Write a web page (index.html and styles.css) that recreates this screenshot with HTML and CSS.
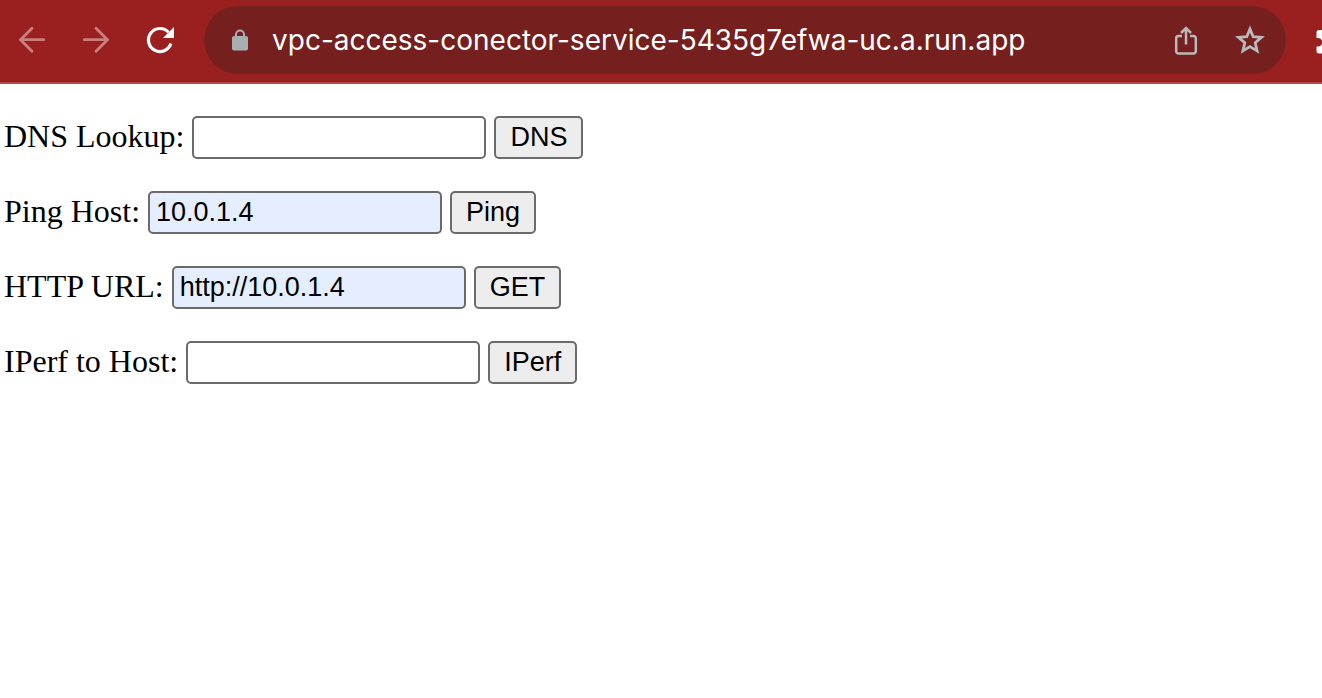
FILE: index.html
```html
<!DOCTYPE html>
<html lang="en">
<head>
<meta charset="utf-8">
<meta name="viewport" content="width=device-width, initial-scale=1">
<title>VPC Access Connector</title>
<link rel="stylesheet" href="styles.css">
</head>
<body>
<header class="toolbar">
  <nav class="nav" aria-label="Browser navigation">
    <button class="icon-button dim" type="button" aria-label="Back">
      <svg class="icon" viewBox="0 0 32 32" fill="none" stroke="currentColor" stroke-width="2.8" stroke-linecap="round"><path d="M27.700 15.700H5M16 4.200 4.500 15.700 16 27.200"/></svg>
    </button>
    <button class="icon-button dim" type="button" aria-label="Forward">
      <svg class="icon" viewBox="0 0 32 32" fill="none" stroke="currentColor" stroke-width="2.8" stroke-linecap="round"><path d="M4.300 15.700H27M16 4.200 27.500 15.700 16 27.200"/></svg>
    </button>
    <button class="icon-button" type="button" aria-label="Reload">
      <svg class="icon" viewBox="0 0 32 32"><path d="M26.900 19.600A11.500 11.500 0 1 1 24.500 8.300" fill="none" stroke="currentColor" stroke-width="3.200"/><path d="M30 3v11H19z" fill="currentColor"/></svg>
    </button>
  </nav>
  <div class="address">
    <svg class="lock" viewBox="0 0 16 22"><rect y="7" width="16" height="14.500" rx="2" fill="currentColor"/><path d="M4 8V5.500a4 4 0 0 1 8 0V8" fill="none" stroke="currentColor" stroke-width="2"/></svg>
    <input class="url" type="text" aria-label="Address" value="vpc-access-conector-service-5435g7efwa-uc.a.run.app">
    <button class="icon-button soft" type="button" aria-label="Share">
      <svg class="icon" viewBox="0 0 32 32" fill="none" stroke="currentColor" stroke-width="2.500"><path d="M12 12H8.500A2.300 2.300 0 0 0 6.200 14.300v13A2.300 2.300 0 0 0 8.500 29.600h15A2.300 2.300 0 0 0 25.800 27.300v-13A2.300 2.300 0 0 0 23.500 12H20M16 20.500V4M11 9l5-5 5 5"/></svg>
    </button>
    <button class="icon-button soft" type="button" aria-label="Bookmark">
      <svg class="icon" viewBox="0 0 32 32" fill="none" stroke="currentColor" stroke-width="2.800"><path d="M16 5l3.200 7.700 8.300.7-6.300 5.400 1.900 8.100L16 22.600 8.900 26.900l1.900-8.100-6.300-5.400 8.300-.7z"/></svg>
    </button>
  </div>
  <button class="icon-button extensions" type="button" aria-label="Extensions">
    <svg class="icon" viewBox="0 0 32 32" fill="currentColor"><path d="M5 6h7a4 4 0 0 1 8 0h5a2.500 2.500 0 0 1 2.500 2.500V14a4 4 0 0 1 0 8v5A2.500 2.500 0 0 1 25 29.500H5A2.500 2.500 0 0 1 2.500 27v-4.500H4a4.200 4.200 0 0 0 0-8.500H2.500V8.500A2.500 2.500 0 0 1 5 6z"/></svg>
  </button>
</header>
<main class="content">
  <form class="row">
    <label for="dns">DNS Lookup:</label>
    <input class="field" id="dns" type="text">
    <button class="action" type="button">DNS</button>
  </form>
  <form class="row">
    <label for="ping">Ping Host:</label>
    <input class="field filled" id="ping" type="text" value="10.0.1.4">
    <button class="action" type="button">Ping</button>
  </form>
  <form class="row">
    <label for="http">HTTP URL:</label>
    <input class="field filled" id="http" type="text" value="http://10.0.1.4">
    <button class="action" type="button">GET</button>
  </form>
  <form class="row">
    <label for="iperf">IPerf to Host:</label>
    <input class="field" id="iperf" type="text">
    <button class="action" type="button">IPerf</button>
  </form>
</main>
</body>
</html>
```
FILE: styles.css
```css
* {
  box-sizing: border-box;
}

body {
  margin: 0;
  background: #fff;
  color: #000;
  font-family: "Liberation Serif", "Times New Roman", serif;
  font-size: 32px;
}

.toolbar {
  display: flex;
  align-items: center;
  gap: 28px;
  padding: 6px 0 8px 16px;
  overflow: hidden;
  background: #9a2020;
  border-bottom: 2px solid #b04b4b;
}

.nav {
  display: flex;
  gap: 32px;
}

.icon-button {
  flex: none;
  display: flex;
  padding: 0;
  border: 0;
  background: none;
  color: #fff;
}

.icon {
  width: 32px;
  height: 32px;
}

.dim {
  color: #c97f7f;
}

.soft {
  color: #bababa;
}

.address {
  flex: 1;
  min-width: 0;
  display: flex;
  align-items: center;
  gap: 32px;
  height: 68px;
  padding: 0 20px 0 28px;
  border-radius: 34px;
  background: #751f1e;
}

.lock {
  flex: none;
  width: 16px;
  height: 22px;
  margin-right: -8px;
  color: #a9aeb2;
}

.url {
  flex: 1;
  min-width: 0;
  padding: 0;
  border: 0;
  outline: 0;
  background: none;
  color: #fff;
  font-family: Inter, sans-serif;
  font-size: 28px;
}

.extensions {
  margin-right: -24px;
}

.content {
  display: grid;
  gap: 32px;
  padding: 32px 4px;
}

.row {
  display: flex;
  align-items: center;
  gap: 8px;
  margin: 0;
}

.row label {
  line-height: 36px;
  padding-bottom: 4px;
}

.field,
.action {
  height: 43px;
  border: 2px solid #6b6b6b;
  border-radius: 5px;
  color: #000;
  font-family: "Liberation Sans", Arial, sans-serif;
  font-size: 27px;
}

.field {
  width: 294px;
  min-width: 0;
  padding: 0 6px;
  background: #fff;
}

.filled {
  background: #e5eefe;
}

.action {
  padding: 0 14px;
  background: #ededed;
}
```
